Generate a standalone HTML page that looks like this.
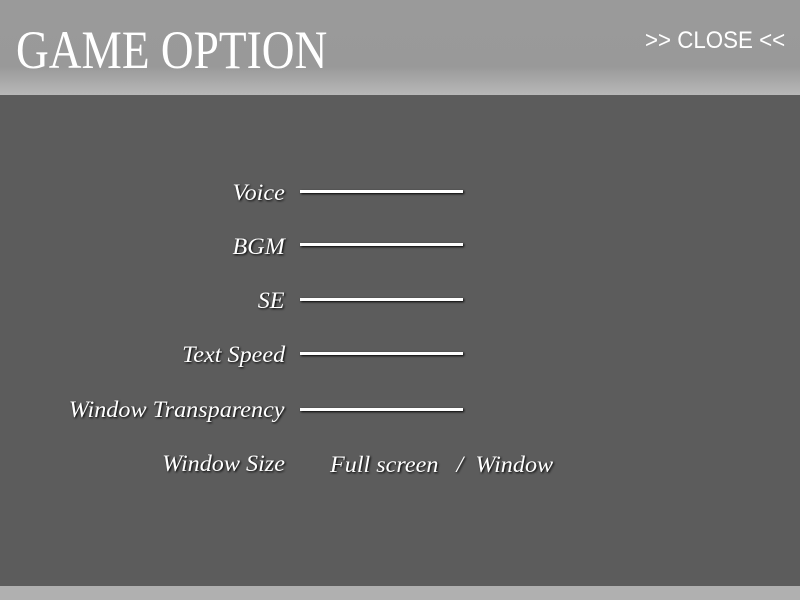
<!DOCTYPE html>
<html><head><meta charset="utf-8"><style>
body{margin:0;width:800px;height:600px;overflow:hidden;background:#5c5c5c;position:relative;font-family:"Liberation Serif",serif;}
#hdr{position:absolute;left:0;top:0;width:800px;height:95px;background:linear-gradient(#9a9a9a 0,#999 70%,#b8b8b8 100%);}
#title{position:absolute;left:16px;top:20px;font-size:54px;color:#fff;transform:scaleX(0.84);transform-origin:left top;line-height:60px;white-space:nowrap;}
#close{position:absolute;left:645px;top:27px;font-family:"Liberation Sans",sans-serif;font-size:24px;color:#fff;transform:scaleX(0.93);transform-origin:left top;white-space:nowrap;}
.lbl{position:absolute;right:515px;font-size:23px;color:#fff;text-shadow:1px 1px 2px #000;white-space:nowrap;font-style:italic;transform:scaleX(1.05);transform-origin:right center;}
.bar{position:absolute;left:300px;width:163px;height:3px;background:#fff;box-shadow:1px 1px 2px #000;}
#bot{position:absolute;left:0;top:586px;width:800px;height:14px;background:#b0b0b0;}
.ws{position:absolute;top:452px;font-size:23px;color:#fff;text-shadow:1px 1px 2px #000;font-style:italic;white-space:nowrap;transform:scaleX(1.05);transform-origin:left center;}
</style></head><body>
<div id="hdr"><div id="title">GAME OPTION</div><div id="close">&gt;&gt; CLOSE &lt;&lt;</div></div>
<div class="lbl" style="top:180px">Voice</div><div class="bar" style="top:190px"></div>
<div class="lbl" style="top:234px">BGM</div><div class="bar" style="top:243px"></div>
<div class="lbl" style="top:288px">SE</div><div class="bar" style="top:298px"></div>
<div class="lbl" style="top:342px">Text Speed</div><div class="bar" style="top:352px"></div>
<div class="lbl" style="top:397px">Window Transparency</div><div class="bar" style="top:408px"></div>
<div class="lbl" style="top:451px">Window Size</div>
<div class="ws" style="left:330px">Full screen &nbsp; / &nbsp;Window</div>
<div id="bot"></div>
</body></html>
